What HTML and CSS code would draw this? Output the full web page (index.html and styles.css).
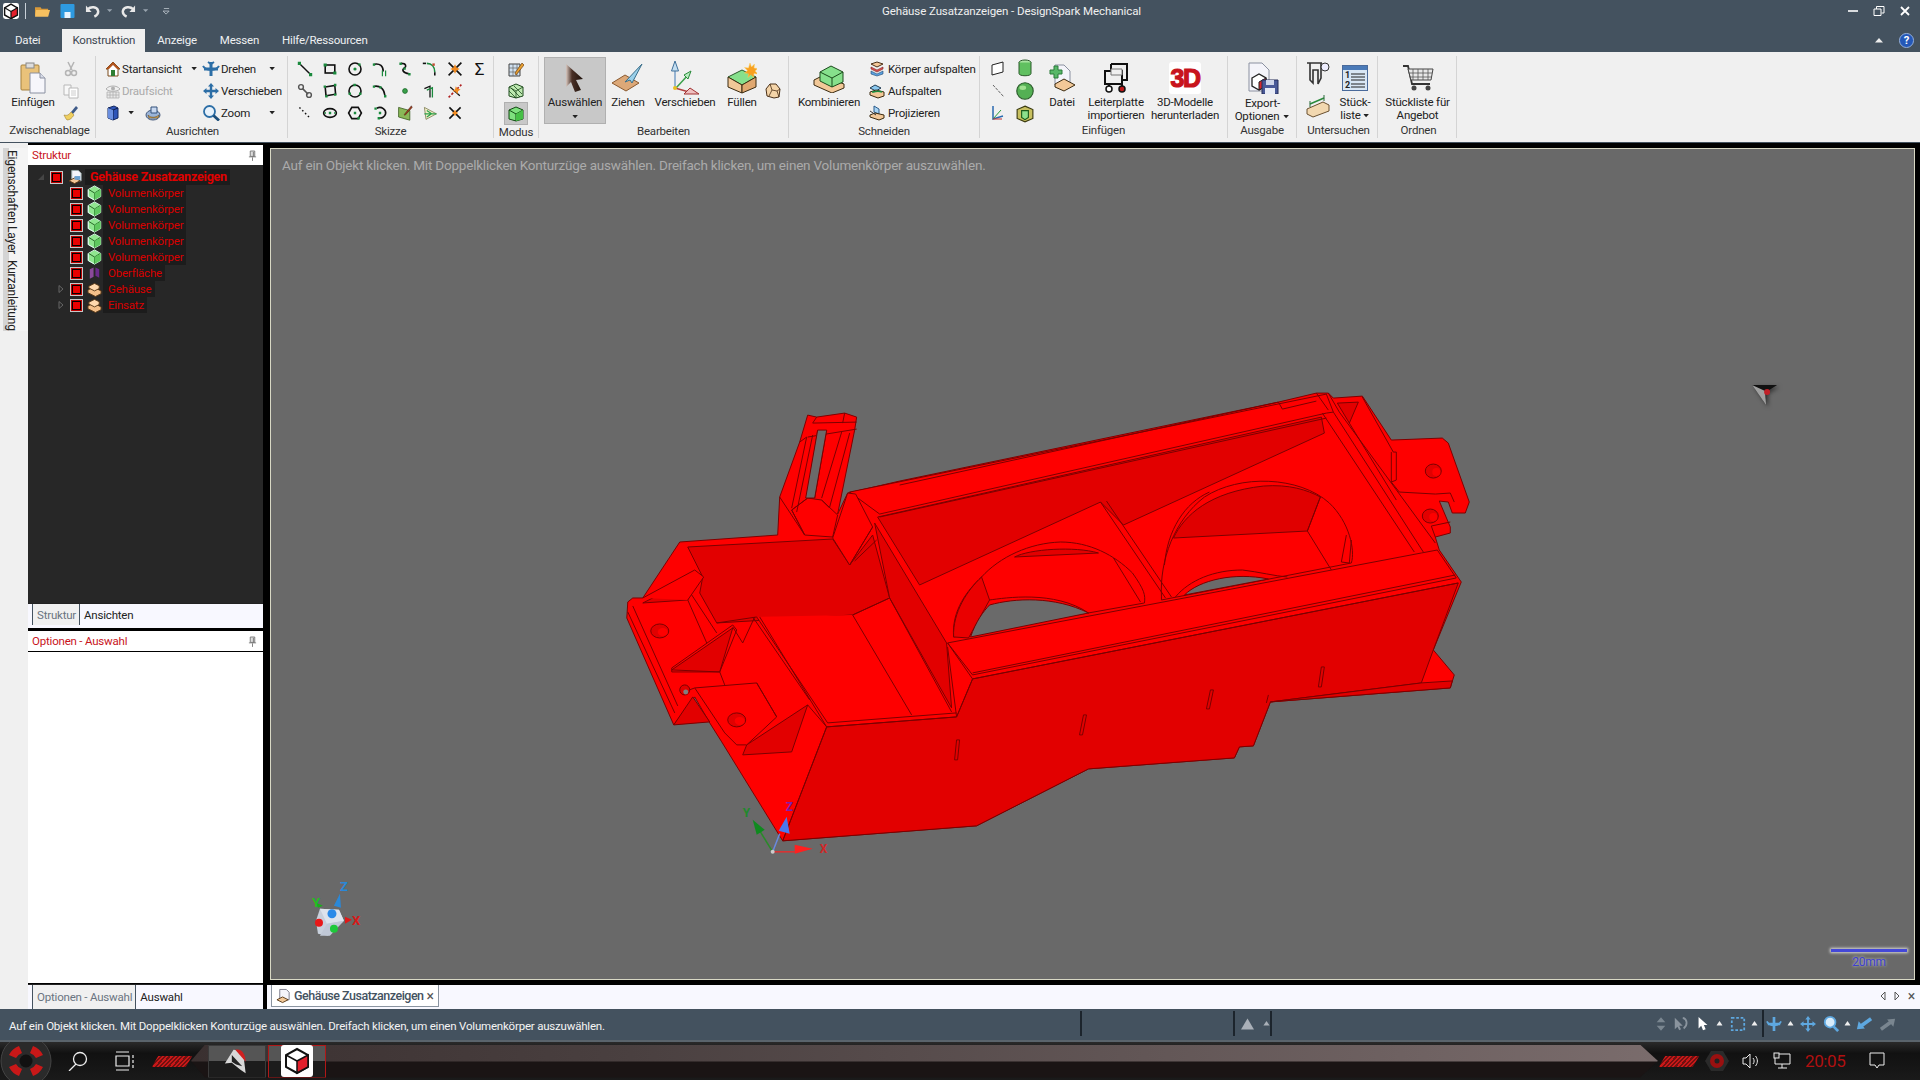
FILE: index.html
```html
<!DOCTYPE html>
<html lang="de">
<head>
<meta charset="utf-8">
<title>Gehäuse Zusatzanzeigen - DesignSpark Mechanical</title>
<link rel="stylesheet" href="styles.css">
</head>
<body>
<svg class="defs" width="0" height="0">
  <defs>
    <symbol id="appcube" viewBox="0 0 20 20"><path d="M10 1.5 18 6v9l-8 4.5L2 15V6z" fill="#fff" stroke="#111" stroke-width="1.8"/><path d="M10 10.5 18 6v9l-8 4.5z" fill="#e3202c" stroke="#111" stroke-width="1.5"/><path d="M2 6l8 4.5" stroke="#111" stroke-width="1.5"/></symbol>
    <symbol id="caret" viewBox="0 0 8 5"><path d="M0 0h7L3.5 4z" fill="#222"/></symbol>
    <symbol id="tri" viewBox="0 0 10 8"><path d="M0 7 5 0l5 7z" fill="#eee"/></symbol>
    <symbol id="greencube" viewBox="0 0 16 18"><path d="M8 1 15 5v8l-7 4-7-4V5z" fill="#8fe68f" stroke="#dfe" stroke-width="1"/><path d="M8 9v8M8 9 1.5 5M8 9l6.500-4" stroke="#1b5a1b" stroke-width="1" fill="none"/><path d="M8 9 15 5v8l-7 4z" fill="#5fc85f"/><path d="M1 5v8l7 4" fill="none" stroke="#dfe"/></symbol>
    <symbol id="partcube" viewBox="0 0 16 16"><path d="M1 9 7 6l8 4v3l-6 3-8-4z" fill="#f4c08a" stroke="#5a3a18"/><path d="M2 5 8 2l5 2.500v3L8 10 2 7z" fill="#ffd9ae" stroke="#5a3a18"/></symbol>
    <symbol id="pin" viewBox="0 0 10 12"><path d="M2.500 1h5v6h-5zM1 7.500h8M5 8v4M6 2v5" stroke="#777" fill="#ddd" stroke-width="1"/></symbol>
  </defs>
</svg>

<header class="titlebar">
  <div class="qat">
    <svg class="qa-app" viewBox="0 0 20 20"><rect width="20" height="20" rx="3" fill="#fff"/><use href="#appcube"/></svg>
    <span class="qa-sep"></span>
    <svg class="qa-ico" viewBox="0 0 16 12"><path d="M0 2h6l1 1.500h7V11H0z" fill="#d99a3a"/><path d="M1 5h15l-2 7H0z" fill="#f6c060"/></svg>
    <svg class="qa-ico qa-save" viewBox="0 0 14 14"><rect width="14" height="14" rx="1" fill="#2e9ae0"/><rect x="4" y="8" width="6" height="6" fill="#e8f4ff"/></svg>
    <svg class="qa-ico qa-undo" viewBox="0 0 16 14"><path d="M3 5c3-3 10-3 11 2 .5 3-2 5-4 6" fill="none" stroke="#e8e8e8" stroke-width="2.600"/><path d="M1 1v7h6z" fill="#e8e8e8"/></svg>
    <svg class="qa-small" viewBox="0 0 8 5"><path d="M0 0h6L3 3z" fill="#9aa5b0"/></svg>
    <svg class="qa-ico qa-redo" viewBox="0 0 16 14"><path d="M13 5C10 2 3 2 2 7c-.5 3 2 5 4 6" fill="none" stroke="#e8e8e8" stroke-width="2.600"/><path d="M15 1v7H9z" fill="#e8e8e8"/></svg>
    <svg class="qa-small" viewBox="0 0 8 5"><path d="M0 0h6L3 3z" fill="#9aa5b0"/></svg>
    <svg class="qa-small qa-cust" viewBox="0 0 8 7"><path d="M1 0h6M0 3h7L3.500 6.500z" stroke="#b8c0c8" fill="none"/></svg>
  </div>
  <div class="title">Gehäuse Zusatzanzeigen - DesignSpark Mechanical</div>
  <div class="winbtns">
    <svg viewBox="0 0 10 10"><path d="M0 5h10" stroke="#fff" stroke-width="1.600"/></svg>
    <svg viewBox="0 0 11 10"><path d="M.5 3h7v6.500h-7zM3 3V.5h7.500V7H8" fill="none" stroke="#fff" stroke-width="1"/></svg>
    <svg viewBox="0 0 10 10"><path d="M1 1l8 8M9 1 1 9" stroke="#fff" stroke-width="1.800"/></svg>
  </div>
</header>

<nav class="tabs">
  <a class="tab t-datei">Datei</a>
  <a class="tab t-active">Konstruktion</a>
  <a class="tab">Anzeige</a>
  <a class="tab">Messen</a>
  <a class="tab">Hilfe/Ressourcen</a>
  <span class="tabs-right">
    <svg class="collapse" viewBox="0 0 8 5"><path d="M0 4.500 4 0l4 4.500z" fill="#eee"/></svg>
    <svg class="help" viewBox="0 0 16 16"><circle cx="8" cy="8" r="7.500" fill="#2458b8" stroke="#9ab4e0"/><text x="8" y="12" text-anchor="middle" class="help-q">?</text></svg>
  </span>
</nav>

<section class="ribbon">
  <div class="group g-clip">
    <div class="gbody">
      <div class="big b-paste">
        <div class="bigico"><svg width="26" height="32" viewBox="0 0 26 32"><rect x="1" y="3" width="18" height="25" rx="1" fill="#e9c27a" stroke="#a5813e"/><rect x="6" y="1" width="8" height="5" fill="#ddd" stroke="#888"/><path d="M10 11h10l5 5v15H10z" fill="#f6f6fb" stroke="#8a90a0"/><path d="M20 11v5h5" fill="#d8dce8" stroke="#8a90a0"/></svg></div>
        <div class="biglabel">Einfügen</div>
      </div>
      <div class="col c-clip">
        <svg class="s" viewBox="0 0 16 16"><path d="M5 1l4 8M11 1 7 9" stroke="#b4b4b4" stroke-width="1.500"/><circle cx="5" cy="12" r="2.500" fill="none" stroke="#b4b4b4" stroke-width="1.500"/><circle cx="11" cy="12" r="2.500" fill="none" stroke="#b4b4b4" stroke-width="1.500"/></svg>
        <svg class="s" viewBox="0 0 16 16"><path d="M1 2h7v10H1z" fill="#f8f8f8" stroke="#b8b8b8"/><path d="M6 5h9v10H6z" fill="#fff" stroke="#b8b8b8"/><path d="M8 8h5M8 10h5M8 12h5" stroke="#ccc"/></svg>
        <svg class="s" viewBox="0 0 16 16"><path d="M8 7 13 1l2 2-5 6z" fill="#3e5a88"/><path d="M1 10c3 1 5 0 7-3l3 3c-2 3-4 5-7 5-1-1-2-3-3-5z" fill="#f0d060" stroke="#a08030" stroke-width=".6"/></svg>
      </div>
    </div>
    <div class="glabel gl-clip">Zwischenablage</div>
  </div>

  <div class="group g-view">
    <div class="gbody">
      <div class="col c-view1">
        <div class="row"><svg class="s" viewBox="0 0 16 16"><path d="M8 1 1 8h2v7h10V8h2z" fill="#fff" stroke="#7a4a1a"/><path d="M8 1 1 8h3l4-4 4 4h3z" fill="#b3541e"/><rect x="6" y="9" width="4" height="6" fill="#2e7d32"/></svg><span class="txt">Startansicht</span><svg class="cr cr-a" viewBox="0 0 8 5"><use href="#caret"/></svg></div>
        <div class="row dim"><svg class="s" viewBox="0 0 16 16"><path d="M1 6c3-4 11-4 14 0-3 3-11 3-14 0z" fill="none" stroke="#b0b0b0"/><circle cx="8" cy="5.500" r="2" fill="#b0b0b0"/><path d="M2 9h12v6H2zM5 9v6M8 9v6M11 9v6M2 12h12" fill="#e8e8e8" stroke="#b0b0b0" stroke-width=".8"/></svg><span class="txt">Draufsicht</span></div>
        <div class="row"><svg class="s" viewBox="0 0 16 16"><path d="M3 3 9 1l4 2v10l-5 2-5-2z" fill="#2e55b8" stroke="#12265e"/><path d="M8 5v10M3 3l5 2 5-2" stroke="#0e1e4a" fill="none"/><path d="M3 3l5 2v10l-5-2z" fill="#6a8fe0"/></svg><svg class="cr cr-b" viewBox="0 0 8 5"><use href="#caret"/></svg><svg class="s s-plane" viewBox="0 0 16 16"><ellipse cx="8" cy="10" rx="7" ry="5" fill="#9ab4d8" stroke="#44587a"/><path d="M3 10c3 3 7 3 11 0l-1 3H4z" fill="#d8a860" stroke="#6a5020" stroke-width=".6"/><path d="M6 2h6v6H6z" fill="#c8d8f0" stroke="#33507a"/></svg></div>
      </div>
      <div class="col">
        <div class="row"><svg class="m" viewBox="0 0 18 16"><path d="M9 1v14M2 8h14" stroke="#2c6ea6" stroke-width="3"/><path d="M1 5c3 5 13 5 16 0M6 1l3 2 3-2" fill="none" stroke="#2c6ea6" stroke-width="2"/></svg><span class="txt">Drehen</span><svg class="cr cr-c" viewBox="0 0 8 5"><use href="#caret"/></svg></div>
        <div class="row"><svg class="m" viewBox="0 0 18 16"><path d="M9 3v10M4 8h10" stroke="#2c6ea6" stroke-width="2.400"/><path d="M9 0l3 3.500H6zM9 16l3-3.500H6zM1 8l3.500-3v6zM17 8l-3.500-3v6z" fill="#2c6ea6"/></svg><span class="txt">Verschieben</span></div>
        <div class="row"><svg class="m" viewBox="0 0 18 16"><circle cx="7.500" cy="6.500" r="5.500" fill="#e8f2fb" stroke="#2c6ea6" stroke-width="1.800"/><path d="M11.500 10.500 17 15.500" stroke="#1c4e7a" stroke-width="2.800"/></svg><span class="txt">Zoom</span><svg class="cr cr-d" viewBox="0 0 8 5"><use href="#caret"/></svg></div>
      </div>
    </div>
    <div class="glabel gl-view">Ausrichten</div>
  </div>

  <div class="group g-sketch">
    <div class="gbody sketch-grid">
      <svg viewBox="0 0 20 20"><path d="M3 3l14 14" stroke="#111" stroke-width="1.800"/><path d="M1 1h4v4H1zM15 15h4v4h-4z" fill="#1b8a3e"/></svg>
      <svg viewBox="0 0 20 20"><rect x="4" y="5" width="12" height="10" fill="none" stroke="#111" stroke-width="2"/><path d="M2 3h4v4H2zM14 13h4v4h-4z" fill="#1b8a3e"/></svg>
      <svg viewBox="0 0 20 20"><circle cx="10" cy="10" r="7.500" fill="none" stroke="#111" stroke-width="2"/><circle cx="10" cy="10" r="2" fill="#1b8a3e"/><rect x="14" y="3" width="3" height="3" fill="#1b8a3e"/></svg>
      <svg viewBox="0 0 20 20"><path d="M3 4c7-1 11 2 11 9" fill="none" stroke="#111" stroke-width="2"/><path d="M13 12v7M17 12v7" stroke="#1b8a3e" stroke-width="1.500"/><rect x="1" y="3" width="3" height="3" fill="#1b8a3e"/></svg>
      <svg viewBox="0 0 20 20"><path d="M5 3c7 0 7 4 4 6-3 2-2 6 6 7" fill="none" stroke="#111" stroke-width="2"/><path d="M3 2h3v3H3zM8 8h3v3H8zM14 15h3v3h-3z" fill="#1b8a3e"/></svg>
      <svg viewBox="0 0 20 20"><path d="M1 3h4" stroke="#111" stroke-width="2"/><path d="M6 3c6 0 10 4 10 11" fill="none" stroke="#1b8a3e" stroke-width="2"/><path d="M16 14v4" stroke="#111" stroke-width="2"/><rect x="13" y="3" width="3" height="3" fill="#c24a30"/></svg>
      <svg viewBox="0 0 20 20"><path d="M2 18 18 2M2 2l16 16" stroke="#111" stroke-width="2"/><path d="M10 4l2 4 4 2-4 2-2 4-2-4-4-2 4-2z" fill="#f08a20"/></svg>
      <span class="sigma">Σ</span>

      <svg viewBox="0 0 20 20"><circle cx="5" cy="5" r="3" fill="none" stroke="#555" stroke-width="1.800"/><path d="M7 7l7 7" stroke="#555" stroke-width="2"/><circle cx="15" cy="15" r="3" fill="none" stroke="#555" stroke-width="1.800"/></svg>
      <svg viewBox="0 0 20 20"><path d="M4 5l12-2 1 11-12 2z" fill="none" stroke="#111" stroke-width="2"/><path d="M2 3h3v3H2zM15 1h3v3h-3zM4 15h3v3H4zM15 13h3v3h-3z" fill="#1b8a3e"/></svg>
      <svg viewBox="0 0 20 20"><circle cx="10" cy="10" r="7.500" fill="none" stroke="#111" stroke-width="2"/><path d="M8 1h3v3H8zM2 12h3v3H2zM15 12h3v3h-3z" fill="#1b8a3e"/></svg>
      <svg viewBox="0 0 20 20"><path d="M3 4c7-1 12 3 13 11" fill="none" stroke="#111" stroke-width="2"/><path d="M1 3h3v3H1zM9 4h3v3H9zM15 15h3v3h-3z" fill="#1b8a3e"/></svg>
      <svg viewBox="0 0 20 20"><circle cx="10" cy="10" r="3" fill="#3aa04a" stroke="#1b6a2a"/></svg>
      <svg viewBox="0 0 20 20"><path d="M3 7l7-3v14" fill="none" stroke="#111" stroke-width="1.600"/><path d="M6 9l7-3v12" fill="none" stroke="#1b8a3e" stroke-width="1.600"/></svg>
      <svg viewBox="0 0 20 20"><path d="M2 18 18 2" stroke="#b02020" stroke-width="2" stroke-dasharray="3 2"/><path d="M4 5l12 11" stroke="#111" stroke-width="1.500"/><path d="M11 4l2 3 4 1-3 2-1 4-2-3-4-1 3-2z" fill="#f08a20"/></svg>
      <span class="blank"></span>

      <svg viewBox="0 0 20 20"><path d="M3 3l14 14" stroke="#111" stroke-width="1.800" stroke-dasharray="2 3"/></svg>
      <svg viewBox="0 0 20 20"><ellipse cx="10" cy="10" rx="8" ry="5.500" fill="none" stroke="#111" stroke-width="2"/><path d="M8.500 8.500h3v3h-3zM3 9h2v2H3zM15 9h2v2h-2z" fill="#1b8a3e"/></svg>
      <svg viewBox="0 0 20 20"><path d="M6 3h8l4 7-4 7H6l-4-7z" fill="none" stroke="#111" stroke-width="2"/><path d="M8.500 8.500h3v3h-3zM13 15h3v3h-3z" fill="#1b8a3e"/></svg>
      <svg viewBox="0 0 20 20"><path d="M6 4c6-3 12 2 11 7-1 4-5 6-8 5" fill="none" stroke="#111" stroke-width="2"/><path d="M3 3h3v3H3zM8.500 8.500h3v3h-3zM7 15h3v3H7z" fill="#1b8a3e"/></svg>
      <svg viewBox="0 0 20 20"><path d="M2 3l14 4v12L2 15z" fill="#8ab858" stroke="#3a5a20"/><path d="M9 12 18 1l1 2-9 10z" fill="#a04020" stroke="#3a1a10" stroke-width=".6"/></svg>
      <svg viewBox="0 0 20 20"><path d="M3 3l15 8-13 7z" fill="#f4f0c8" stroke="#7a7a50"/><path d="M3 11l15 0M6 7l6 4-6 4" fill="none" stroke="#2aa04a" stroke-width="1.500"/></svg>
      <svg viewBox="0 0 20 20"><path d="M3 17 17 3M3 3l14 14" stroke="#111" stroke-width="2"/><path d="M10 6l1.500 2.500L14 10l-2.500 1.500L10 14l-1.500-2.500L6 10l2.500-1.500z" fill="#f08a20"/></svg>
      <span class="blank"></span>
    </div>
    <div class="glabel">Skizze</div>
  </div>

  <div class="group g-mode">
    <div class="gbody">
      <div class="col c-mode">
        <svg class="md" viewBox="0 0 16 16"><path d="M1 3h11v12H1z" fill="#cfe0f0" stroke="#444"/><path d="M1 7h11M1 11h11M5 3v12M9 3v12" stroke="#666" stroke-width=".7"/><path d="M7 12 14 2l2 2-8 10z" fill="#e8a030" stroke="#704010" stroke-width=".7"/></svg>
        <svg class="md" viewBox="0 0 16 16"><path d="M8 1 15 4v9l-7 2-7-2V4z" fill="#bde8b0" stroke="#1e4a1e"/><path d="M3 5l9 9M6 3l8 8M1 8l7 7M8 8v7M1 4l7 4 7-4" stroke="#1e4a1e" stroke-width=".8" fill="none"/></svg>
        <span class="md-on"><svg class="md" viewBox="0 0 16 16"><path d="M8 1 15 4v9l-7 2-7-2V4z" fill="#7ee07e" stroke="#124a12"/><path d="M1 4l7 4 7-4M8 8v7" stroke="#124a12" fill="none"/><path d="M8 8l7-4v9l-7 2z" fill="#46c046"/></svg></span>
      </div>
    </div>
    <div class="glabel">Modus</div>
  </div>

  <div class="group g-edit">
    <div class="gbody">
      <div class="big b-select">
        <div class="bigico"><svg width="22" height="30" viewBox="0 0 22 30"><defs><linearGradient id="arrowg" x1="0" x2="1" y1="0" y2="0"><stop offset="0" stop-color="#d8c8c0"/><stop offset=".35" stop-color="#4a3026"/><stop offset="1" stop-color="#1e120c"/></linearGradient></defs><path d="M2 1 19 16l-7 1 5 10-6 2-4-10-5 5z" fill="url(#arrowg)"/></svg></div>
        <div class="biglabel">Auswählen</div>
        <svg class="cr cr-sel" viewBox="0 0 8 5"><use href="#caret"/></svg>
      </div>
      <div class="big b-44">
        <div class="bigico"><svg width="34" height="30" viewBox="0 0 34 30"><path d="M1 20 14 12l14 8-13 8z" fill="#dca878" stroke="#8a5a30"/><path d="M14 19 31 1 21 20l-2-3z" fill="#9ad0ea" stroke="#3a6e8a"/></svg></div>
        <div class="biglabel">Ziehen</div>
      </div>
      <div class="big b-70">
        <div class="bigico"><svg width="30" height="34" viewBox="0 0 30 34"><path d="M5 27V3" stroke="#7aa0c8" stroke-width="1.500"/><path d="M5 0l3.500 10h-7z" fill="#c4def0" stroke="#40709a"/><path d="M6 27 19 13" stroke="#3aa04a" stroke-width="1.500"/><path d="M21 10l-3 8-4-4z" fill="#b8ecc0" stroke="#2a8a3a"/><path d="M5 27l14 4" stroke="#b04040" stroke-width="1.500"/><path d="M29 33H14l6-6z" fill="#f0c0c0" stroke="#a03030"/><circle cx="5" cy="27" r="2" fill="#e8c020"/></svg></div>
        <div class="biglabel">Verschieben</div>
      </div>
      <div class="big b-44">
        <div class="bigico"><svg width="30" height="32" viewBox="0 0 30 32"><path d="M1 15 15 8l14 7-14 8z" fill="#86e08c" stroke="#2a5a2a"/><path d="M1 15v10l14 6V23z" fill="#f2c898" stroke="#3a2a10"/><path d="M29 15v10l-14 6V23z" fill="#e0a870" stroke="#3a2a10"/><path d="M23 1l1.500 4 3-3-.5 4 4 .5-3 2.500 3 3-4-.5-.5 4-2.500-3-3 3 .5-4-4-.5 3-2.500-3-3 4 .5z" fill="#f8a020" stroke="#f8d060" stroke-width=".5"/></svg></div>
        <div class="biglabel">Füllen</div>
      </div>
      <div class="col c-fill">
        <svg class="md" viewBox="0 0 16 16"><path d="M5 1h6l4 5-1 8-5 1-7-2-1-7z" fill="#f4d4a8" stroke="#4a3018"/><path d="M5 1 7 7l-3 6M7 7l5 1 2 6M12 8l3-2" stroke="#4a3018" fill="none" stroke-width=".8"/></svg>
      </div>
    </div>
    <div class="glabel">Bearbeiten</div>
  </div>

  <div class="group g-cut">
    <div class="gbody">
      <div class="big b-80">
        <div class="bigico"><svg width="32" height="30" viewBox="0 0 32 30"><path d="M1 17 9 13l22 8v4l-12 5L1 22z" fill="#f2c898" stroke="#3a2a10"/><path d="M7 9l11-6 12 6v10l-11 5-12-6z" fill="#86e08c" stroke="#1a4a1a"/><path d="M7 9l12 6 11-6M19 15v9" fill="none" stroke="#1a4a1a"/></svg></div>
        <div class="biglabel">Kombinieren</div>
      </div>
      <div class="col">
        <div class="row r-cut"><svg class="s" viewBox="0 0 16 16"><path d="M2 3l6-2 6 2-6 3z" fill="#f4c89a" stroke="#4a3018"/><path d="M2 6l6 3 6-3v2l-6 3-6-3z" fill="#e05050" stroke="#702020" stroke-width=".6"/><path d="M2 10l6 3 6-3v3l-6 2-6-2z" fill="#5aa0e0" stroke="#204870" stroke-width=".6"/></svg><span class="txt">Körper aufspalten</span></div>
        <div class="row r-cut"><svg class="s" viewBox="0 0 16 16"><path d="M1 5l5-3 6 3-5 3z" fill="#8ac8f0" stroke="#203a50"/><path d="M1 9l6-2 8 2v4l-6 2-8-3z" fill="#f2c898" stroke="#3a2a10"/><path d="M3 9c4 0 5-2 10 0" stroke="#1b8a3e" stroke-width="1.500" fill="none"/></svg><span class="txt">Aufspalten</span></div>
        <div class="row r-cut"><svg class="s" viewBox="0 0 16 16"><path d="M5 1l5 3v5L5 7z" fill="#a8d4f4" stroke="#2a5a8a"/><path d="M1 10l5-2 9 2v3l-5 2-9-3z" fill="#f2c898" stroke="#3a2a10"/><path d="M1 6l6 4" stroke="#333"/></svg><span class="txt">Projizieren</span></div>
      </div>
    </div>
    <div class="glabel">Schneiden</div>
  </div>

  <div class="group g-insert">
    <div class="gbody">
      <div class="col c-ins1">
        <svg class="md" viewBox="0 0 16 16"><path d="M2 4l11-3v10L2 14z" fill="#fff" stroke="#222"/></svg>
        <svg class="md" viewBox="0 0 16 16"><path d="M3 2l11 12" stroke="#666" stroke-dasharray="3 1"/></svg>
        <svg class="md" viewBox="0 0 16 16"><path d="M3 1v13l10-3" fill="none" stroke="#2a6ab0" stroke-width="1.500"/><path d="M3 14 11 5" stroke="#2a9a3a"/><path d="M3 14h9" stroke="#c03030"/></svg>
      </div>
      <div class="col c-ins2">
        <svg class="md lg" viewBox="0 0 16 18"><ellipse cx="8" cy="3.500" rx="6" ry="2.500" fill="#a8e4a0" stroke="#2a5a2a"/><path d="M2 3.500v11c0 3 12 3 12 0v-11" fill="#60c060" stroke="#2a5a2a"/></svg>
        <svg class="md lg" viewBox="0 0 16 16"><circle cx="8" cy="8" r="7.300" fill="#54b054" stroke="#2a5a2a"/><ellipse cx="6" cy="5" rx="3" ry="2" fill="#a0e090"/></svg>
        <svg class="md lg" viewBox="0 0 16 16"><path d="M8 1 15 4v8l-7 3-7-3V4z" fill="#c8c060" stroke="#3a3a10"/><path d="M5 5h6v6l-3 2-3-2z" fill="#8ce08c" stroke="#1a5a1a"/></svg>
      </div>
      <div class="big b-file">
        <div class="bigico"><svg width="26" height="30" viewBox="0 0 26 30"><path d="M6 2h9l6 6v14H6z" fill="#f4f4fa" stroke="#8a90a0"/><path d="M1 7h4V3h4v4h4v4H9v4H5v-4H1z" fill="#58b868" stroke="#2a7a3a"/><path d="M6 21l9-5 11 6-11 6-9-4z" fill="#f2c898" stroke="#3a2a10"/></svg></div>
        <div class="biglabel">Datei</div>
      </div>
      <div class="big b-pcb">
        <div class="bigico"><svg width="24" height="30" viewBox="0 0 24 30"><path d="M7 1h16v16h-5M7 1v7" fill="none" stroke="#111" stroke-width="2"/><path d="M1 8h17v13H1z" fill="none" stroke="#111" stroke-width="2"/><path d="M7 6h11v6H7z" fill="#f0f0f0" stroke="#777"/><path d="M5 21v3M18 21v3" stroke="#111" stroke-width="2"/><circle cx="5" cy="26" r="3" fill="#fff" stroke="#111" stroke-width="1.500"/><circle cx="18" cy="26" r="3" fill="#c01818" stroke="#111" stroke-width="1.500"/></svg></div>
        <div class="biglabel">Leiterplatte<br>importieren</div>
      </div>
      <div class="big b-3d">
        <div class="bigico"><span class="logo3d">3D</span></div>
        <div class="biglabel">3D-Modelle<br>herunterladen</div>
      </div>
    </div>
    <div class="glabel">Einfügen</div>
  </div>

  <div class="group g-out">
    <div class="gbody">
      <div class="big b-export">
        <div class="bigico"><svg width="32" height="32" viewBox="0 0 32 32"><path d="M2 1h13l7 7v21H2z" fill="#f4f4fa" stroke="#8a90a0"/><path d="M5 16l7-4 7 4v8l-7 4-7-4z" fill="#fff" stroke="#222" stroke-width="1.300"/><path d="M12 20l7-4v8l-7 4z" fill="#d8282c" stroke="#222"/><path d="M15 18h16v14H15z" fill="#4a5a98" stroke="#242c58"/><path d="M19 18h8v5h-8z" fill="#cfd6ea"/><path d="M18 26h10v6H18z" fill="#e8ecf6"/></svg></div>
        <div class="biglabel">Export-<br>Optionen<svg class="cr cr-in" viewBox="0 0 8 5"><use href="#caret"/></svg></div>
      </div>
    </div>
    <div class="glabel">Ausgabe</div>
  </div>

  <div class="group g-inspect">
    <div class="gbody">
      <div class="col c-insp">
        <svg class="caliper" viewBox="0 0 26 24"><path d="M2 1h15M5 1v17l3 3V8h5v14l3-6V1" fill="none" stroke="#333" stroke-width="1.600"/><circle cx="20" cy="5" r="4" fill="#eef" stroke="#333"/></svg>
        <svg class="caliper" viewBox="0 0 26 24"><path d="M2 15l16-7 6 3v6L8 23l-6-3z" fill="#f2d8b0" stroke="#6a5030"/><path d="M5 10l14-6" stroke="#2a8a3a" stroke-width="1.500"/><path d="M5 7v6M19 1v6" stroke="#2a6a3a"/></svg>
      </div>
      <div class="big b-bom">
        <div class="bigico"><svg width="26" height="26" viewBox="0 0 26 26"><rect x=".5" y=".5" width="25" height="25" fill="#d8e6f4" stroke="#4a6a9a"/><rect x="1" y="1" width="24" height="4" fill="#4a7ab8"/><text x="3" y="13" class="bom-n">1</text><text x="3" y="23" class="bom-n">2</text><path d="M9 9h14M9 12h14M9 15h14M9 19h14M9 22h14" stroke="#222" stroke-width="1.200"/></svg></div>
        <div class="biglabel">Stück-<br>liste<svg class="cr cr-in2" viewBox="0 0 8 5"><use href="#caret"/></svg></div>
      </div>
    </div>
    <div class="glabel gl-insp">Untersuchen</div>
  </div>

  <div class="group g-order">
    <div class="gbody">
      <div class="big b-cart">
        <div class="bigico"><svg width="32" height="28" viewBox="0 0 32 28"><path d="M1 2h5l4 18h18" fill="none" stroke="#333" stroke-width="1.800"/><path d="M6 5h25l-2 11H9z" fill="#e8e8e8" stroke="#444"/><path d="M11 5v11M16 5v11M21 5v11M26 5v11M7 9h23M8 13h22" stroke="#555" stroke-width=".8"/><circle cx="12" cy="24" r="2.500" fill="#444"/><circle cx="26" cy="24" r="2.500" fill="#444"/></svg></div>
        <div class="biglabel">Stückliste für<br>Angebot</div>
      </div>
    </div>
    <div class="glabel gl-insp">Ordnen</div>
  </div>
</section>
<div class="ribbon-line"></div>

<main class="main">
  <aside class="strip">
    <div class="vtabs">
      <span class="vtab v1">Eigenschaften</span>
      <span class="vtab v2">Layer</span>
      <span class="vtab v3">Kurzanleitung</span>
    </div>
  </aside>

  <aside class="panels">
    <div class="phead">Struktur<svg class="pin" viewBox="0 0 10 12"><use href="#pin"/></svg></div>
    <div class="tree">
      <div class="node root"><svg class="exp" viewBox="0 0 8 8"><path d="M7 1v6H1z" fill="#444"/></svg><span class="chk"></span><svg class="ico" viewBox="0 0 16 16"><path d="M4 1h7l3 3v8H4z" fill="#f4f4fa" stroke="#9aa"/><path d="M1 12l6-3 6 3-6 3z" fill="#f2c898" stroke="#5a3a18"/><path d="M7 7h6v4H7z" fill="#6aa0d0"/></svg><span class="lbl">Gehäuse Zusatzanzeigen</span></div>
      <div class="node"><span class="chk"></span><svg class="ico"><use href="#greencube"/></svg><span class="lbl">Volumenkörper</span></div>
      <div class="node"><span class="chk"></span><svg class="ico"><use href="#greencube"/></svg><span class="lbl">Volumenkörper</span></div>
      <div class="node"><span class="chk"></span><svg class="ico"><use href="#greencube"/></svg><span class="lbl">Volumenkörper</span></div>
      <div class="node"><span class="chk"></span><svg class="ico"><use href="#greencube"/></svg><span class="lbl">Volumenkörper</span></div>
      <div class="node"><span class="chk"></span><svg class="ico"><use href="#greencube"/></svg><span class="lbl">Volumenkörper</span></div>
      <div class="node"><span class="chk"></span><svg class="ico" viewBox="0 0 16 16"><path d="M3 4l4-2v10l-4 2z" fill="#8a4a9a"/><path d="M9 2l4 2v9l-4-2z" fill="#6a2a8a"/></svg><span class="lbl">Oberfläche</span></div>
      <div class="node kid"><svg class="exp" viewBox="0 0 8 8"><path d="M2 .5 6 4 2 7.500z" fill="none" stroke="#666"/></svg><span class="chk"></span><svg class="ico"><use href="#partcube"/></svg><span class="lbl">Gehäuse</span></div>
      <div class="node kid"><svg class="exp" viewBox="0 0 8 8"><path d="M2 .5 6 4 2 7.500z" fill="none" stroke="#666"/></svg><span class="chk"></span><svg class="ico"><use href="#partcube"/></svg><span class="lbl">Einsatz</span></div>
    </div>
    <div class="ptabs"><span class="ptab on">Struktur</span><span class="ptab">Ansichten</span></div>
    <div class="pgap"></div>
    <div class="phead">Optionen - Auswahl<svg class="pin" viewBox="0 0 10 12"><use href="#pin"/></svg></div>
    <div class="pbody"></div>
    <div class="ptabs p2"><span class="ptab on">Optionen - Auswahl</span><span class="ptab">Auswahl</span></div>
  </aside>

  <section class="workspace">
    <div class="viewport">
      <svg class="canvas" viewBox="0 0 1644 830"><g transform="translate(-271 -149)">
        <!-- silhouette -->
        <path fill="#fe0000" stroke="#800000" stroke-width="1" stroke-linejoin="round" d="M783 841 722 742 710 723 695 697 674 725 627 618 628 602 633 598 643 598 680 542 778 535 780 497 800 442 808 415 817 417 845 413 857 417 855 430 838 514 848 493 900 481 1020 456 1279 402 1317 393 1329 393 1334 398 1363 396 1392 440 1443 438 1449 443 1470 502 1466 513 1453 513 1449 502 1440 501 1451 527 1451 533 1436 537 1440 550 1462 582 1434 650 1455 675 1451 688 1271 702 1254 746 1240 747 1235 758 1089 769 977 826Z"/>
        <!-- dark faces -->
        <g fill="#e20000" stroke="#7a0000" stroke-width="1" stroke-linejoin="round">
          <path d="M827 727 957 717 973 679 1459 583 1434 650 1422 683 1271 702 1254 746 1240 747 1235 758 1089 769 977 826 783 841Z"/>
          <path d="M688 547 833 539 850 565 873 535 890 598 853 615 717 623 700 593 703 577Z"/>
          <path d="M878 517 1322 417 1325 433 1124 525 1101 502 920 585Z"/>
          <path d="M875 523 947 643 952 708 890 598Z"/>
          <path d="M643 603 688 600 695 577Z"/>
          <path d="M672 670 733 628 720 672Z"/>
          <path d="M747 745 808 705 792 752 743 755Z"/>
          <path d="M674 725 693 697 710 722Z"/>
          <path d="M1338 403 1359 402 1350 423Z"/>
          <path d="M1422 683 1453 681 1451 688 1271 702Z"/>
        </g>
        <!-- floors, rims, brackets -->
        <g fill="#fe0000" stroke="#7a0000" stroke-width="1" stroke-linejoin="round">
          <path d="M757 617 853 615 957 713 828 723Z" stroke="none"/>
          <path d="M695 688 757 683 777 717 747 745 737 745 725 733Z"/>
          <path d="M643 598 695 570 704 577 688 600"/>
          <path d="M672 668 733 625 737 630 720 672 672 672Z" fill="none"/>
          <path d="M948 643 1422 553 1438 550 1457 578 973 675Z"/>
          <path d="M850 492 1327 394 1334 412 1327 413 880 514Z"/>
          <path d="M808 498 822 500 838 515 833 537 805 535 792 510Z"/>
          <path d="M848 493 856 494 873 527 850 565 833 538Z"/>
        </g>
        <!-- holes -->
        <path fill="#fe0000" stroke="#7a0000" d="M1162 597C1160 560 1175 520 1205 497 1240 474 1300 476 1330 503 1350 522 1356 550 1352 563L1162 600Z"/>
        <path fill="#e00000" stroke="#7a0000" d="M1174 538C1185 515 1210 492 1264 486 1290 484 1308 490 1321 497L1308 531Z"/>
        <path fill="none" stroke="#7a0000" d="M1165 565C1168 530 1185 503 1210 492M1308 531 1332 570M1321 497 1308 531M1347 535 1342 562 1350 563 1352 540"/>
        <path fill="#fe0000" stroke="#7a0000" d="M954 637C952 610 968 590 982 577 1000 557 1030 543 1061 542 1090 542 1115 555 1133 573 1145 590 1146 595 1145 603Z"/>
        <path fill="#e20000" stroke="#7a0000" d="M1015 557C1030 549 1075 546 1099 553Z"/>
        <path fill="#ea0000" stroke="#7a0000" d="M954 637C953 612 968 590 982 577L990 600 969 638Z"/>
        <path fill="none" stroke="#7a0000" d="M1114 558 1141 602M990 600C1005 598 1055 590 1089 613"/>
        <path fill="#6a6a6a" stroke="#7a0000" d="M971 637C976 622 984 611 990 605 1015 598 1055 596 1089 613Z"/>
        <path fill="none" stroke="#7a0000" d="M1176 597C1190 580 1215 570 1243 570 1260 572 1275 576 1288 577"/>
        <path fill="#6a6a6a" stroke="#7a0000" d="M1185 595C1200 580 1235 572 1269 579Z"/>
        <!-- detail lines -->
        <g fill="none" stroke="#7a0000" stroke-width="1">
          <path d="M1101 502 1166 598M1107 501 1172 597"/>
          <path d="M900 485 1279 402M880 517 1327 418M1279 402 1283 409 1317 401M1317 393 1329 410"/>
          <path d="M1323 413 1415 552M1334 412 1424 552M1340 412 1436 543M1329 393 1340 412"/>
          <path d="M1363 397 1394 452 1397 452 1397 480 1392 482 1392 452M1350 423 1397 500M1392 482 1400 492 1436 494 1451 493 1455 502"/>
          <path d="M973 673 1456 575M973 679 1459 583M948 643 973 679M948 647 957 717M973 679 957 717"/>
          <path d="M828 723 957 713M827 727 957 717M757 617 828 723M760 617 827 727M853 615 912 715M890 598 952 712M853 615 890 598M717 623 757 617"/>
          <path d="M753 617 810 700M743 643 755 617M733 627 743 643M827 727 783 841M808 705 827 727"/>
          <path d="M628 612 675 713M633 606 678 706M692 595 717 633M688 600 707 643M720 672 725 685M757 683 777 717M695 688 684 692"/>
          <path d="M850 565 873 527M855 561 877 540"/>
          <path d="M813 423 857 422M817 417 813 423M845 413 843 423M792 508 807 437M797 512 813 435M808 498 818 430M815 498 827 430M822 498 842 432M830 507 850 433M808 437 857 429M808 498 792 510M822 500 830 508M780 497 805 535M792 510 805 535M800 442 807 437"/>
          <path d="M1436 537 1432 526 1451 522"/>
          <path d="M957 740 955 760 958 760 960 740ZM1084 715 1080 735 1083 735 1087 715ZM1211 690 1207 709 1210 709 1214 690ZM1322 667 1319 687 1322 687 1325 667ZM1269 695 1267 703"/>
        </g>
        <path fill="#6a6a6a" d="M818 430 827 430 815 498 806 498Z" stroke="#7a0000"/>
        <!-- mounting holes -->
        <g fill="#e20000" stroke="#7a0000">
          <ellipse cx="660" cy="631" rx="9" ry="7"/><ellipse cx="737" cy="720" rx="9" ry="7"/>
          <ellipse cx="1434" cy="471" rx="8" ry="7"/><ellipse cx="1431" cy="516" rx="8" ry="7"/>
          <ellipse cx="685" cy="690" rx="5" ry="5"/>
        </g>
        <ellipse cx="686" cy="692" rx="2.500" ry="2.500" fill="#808080"/>
        <ellipse cx="1437" cy="472" rx="4" ry="4" fill="#fe0000"/><ellipse cx="1434" cy="517" rx="4" ry="4" fill="#fe0000"/>
        <ellipse cx="663" cy="632" rx="5" ry="4" fill="#fe0000"/><ellipse cx="740" cy="721" rx="5" ry="4" fill="#fe0000"/>
        <!-- origin triad -->
        <g class="triad">
          <path d="M773 852 780 834" stroke="#6a8ae0" stroke-width="1.500"/>
          <path d="M787 817 790 834 779 831Z" fill="#4a78f0"/>
          <path d="M773 852 757 826" stroke="#2a8a2a" stroke-width="1.500"/>
          <path d="M753 820 765 830 757 835Z" fill="#0f8a1f"/>
          <path d="M773 852H795" stroke="#e03030" stroke-width="1.500"/>
          <path d="M813 849 795 845V854Z" fill="#ff2020"/>
          <circle cx="773" cy="852" r="2" fill="#ccc"/>
          <text x="820" y="853" class="tx tx-x">X</text>
          <text x="743" y="817" class="tx tx-y">Y</text>
          <text x="786" y="811" class="tx tx-z">Z</text>
        </g>
        <!-- view cube -->
        <g>
          <path d="M320 909 339 910 344 921 328 936 318 934 316 921Z" fill="#c8d0dc"/>
          <path d="M320 909 339 910 344 921 327 924Z" fill="#dde3ec"/>
          <path d="M327 924 344 921 330 936 320 936Z" fill="#c0c8d6"/>
          <circle cx="332" cy="914" r="4.500" fill="#2a8ae8"/>
          <circle cx="319" cy="923" r="4" fill="#e81818"/>
          <circle cx="334" cy="929" r="4" fill="#1ec83a"/>
          <path d="M334 906 340 894 341 908Z" fill="#2a88d8"/>
          <path d="M318 908 316 903 323 906Z" fill="#18b018"/>
          <path d="M345 917 352 920 345 924Z" fill="#e01818"/>
          <text x="340" y="891" class="cube-t ct-z">Z</text>
          <text x="312" y="907" class="cube-t ct-y">Y</text>
          <text x="352" y="925" class="cube-t ct-x">X</text>
        </g>
        <!-- pointer -->
        <path d="M1753 385 1778 385 1767 392 1767 405Z" fill="#111" filter="drop-shadow(2px 2px 2px #333)"/>
        <path d="M1753 385 1766 391 1767 405Z" fill="#ddd" opacity=".7"/>
        <circle cx="1768" cy="392" r="3" fill="#c02028"/>
      </g></svg>
      <div class="hint">Auf ein Objekt klicken. Mit Doppelklicken Konturzüge auswählen. Dreifach klicken, um einen Volumenkörper auszuwählen.</div>
      <div class="scale"><span class="scale-bar"></span><span class="scale-t">20mm</span></div>
    </div>
    <div class="doctabs">
      <span class="doctab"><svg class="ico" viewBox="0 0 16 16"><path d="M4 1h7l3 3v8H4z" fill="#f4f4fa" stroke="#778"/><path d="M1 12l6-3 6 3-6 3z" fill="#f2c898" stroke="#5a3a18"/></svg><b>Gehäuse Zusatzanzeigen</b><i class="x">×</i></span>
      <span class="docnav"><svg viewBox="0 0 6 10"><path d="M5 1 1 5l4 4z" fill="none" stroke="#555"/></svg><svg viewBox="0 0 6 10"><path d="M1 1l4 4-4 4z" fill="none" stroke="#555"/></svg><i class="x">×</i></span>
    </div>
  </section>
</main>

<footer class="status">
  <div class="st-text">Auf ein Objekt klicken. Mit Doppelklicken Konturzüge auswählen. Dreifach klicken, um einen Volumenkörper auszuwählen.</div>
  <div class="st-cell c1"></div>
  <div class="st-cell c2"><svg class="st-a" viewBox="0 0 14 12"><path d="M0 12 7 0l7 12z" fill="#aab0b8"/></svg><svg class="st-t" viewBox="0 0 10 8"><path d="M0 7 5 0l5 7z" fill="#aab0b8"/></svg></div>
  <div class="st-cell c3"></div>
  <div class="st-cell c4">
    <svg class="si si-ud" viewBox="0 0 14 18"><path d="M7 1l5 6H2zM7 17l5-6H2z" fill="#7a8690"/></svg>
    <svg class="si si-6" viewBox="0 0 18 18"><path d="M2 2v13l3-3 2 4 2-1-2-4h4z" fill="#8a949e"/><path d="M11 2c5 1 6 8 1 12" fill="none" stroke="#8a949e" stroke-width="2"/></svg>
    <svg class="si si-6" viewBox="0 0 14 18"><path d="M2 1v13l3-3 2 5 3-1-2-5h4z" fill="#fff"/></svg><svg class="st-t" viewBox="0 0 10 8"><use href="#tri"/></svg>
    <svg class="si si-7" viewBox="0 0 18 18"><rect x="2" y="2" width="14" height="14" fill="none" stroke="#5ea8e0" stroke-width="2" stroke-dasharray="3 2"/></svg><svg class="st-t" viewBox="0 0 10 8"><use href="#tri"/></svg>
    <span class="st-sep"></span>
    <svg class="si si-2" viewBox="0 0 18 18"><path d="M9 1v16M2 9h14" stroke="#5ea8e0" stroke-width="3"/><path d="M1 6c3 6 13 6 16 0" fill="none" stroke="#5ea8e0" stroke-width="2"/></svg><svg class="st-t" viewBox="0 0 10 8"><use href="#tri"/></svg>
    <svg class="si si-6" viewBox="0 0 18 18"><path d="M9 3v12M3 9h12" stroke="#5ea8e0" stroke-width="2"/><path d="M9 0l3 4H6zM9 18l3-4H6zM0 9l4-3v6zM18 9l-4-3v6z" fill="#5ea8e0"/></svg>
    <svg class="si si-7" viewBox="0 0 18 18"><circle cx="8" cy="7" r="6" fill="#d8ecfa" stroke="#5ea8e0" stroke-width="2"/><path d="M12 12l5 5" stroke="#5ea8e0" stroke-width="3"/></svg><svg class="st-t" viewBox="0 0 10 8"><use href="#tri"/></svg>
    <svg class="si si-5" viewBox="0 0 18 18"><path d="M17 3 6 11" stroke="#5ea8e0" stroke-width="4"/><path d="M1 15l2-9 7 8z" fill="#5ea8e0"/></svg>
    <svg class="si si-8" viewBox="0 0 18 18"><path d="M1 15 12 7" stroke="#7a8690" stroke-width="4"/><path d="M17 3l-2 9-7-8z" fill="#7a8690"/></svg>
  </div>
</footer>

<footer class="taskbar">
  <svg class="orb" viewBox="0 0 52 38"><circle cx="26" cy="19" r="25" fill="#2a2a2a" stroke="#444"/><path d="M9 13A18 18 0 0 1 19 4l3 7a11 11 0 0 0-6 5zM43 13A18 18 0 0 0 33 4l-3 7a11 11 0 0 1 6 5zM9 25a18 18 0 0 0 10 9l3-7a11 11 0 0 1-6-5zM43 25a18 18 0 0 1-10 9l-3-7a11 11 0 0 0 6-5z" fill="#c81818"/><circle cx="26" cy="19" r="6.500" fill="#111"/></svg>
  <svg class="tb-search" viewBox="0 0 20 20"><circle cx="12" cy="8" r="6.500" fill="none" stroke="#eee" stroke-width="1.300"/><path d="M8 13 1 20" stroke="#eee" stroke-width="1.300"/></svg>
  <svg class="tb-tasks" viewBox="0 0 20 20"><path d="M1 1h13M1 5h13v10H1zM1 19h13M18 4v3M18 9v3M18 14v3" fill="none" stroke="#eee" stroke-width="1.200"/></svg>
  <div class="tb-stripe"></div>
  <div class="tb-fill">
    <span class="tb-app"><svg viewBox="0 0 32 30"><path d="M12 2 2 18l8-1 10 8 6 4-2-16c-1-7-6-11-12-11z" fill="#d8d8d8"/><path d="M14 2c8-2 12 6 12 14l-5-6z" fill="#d02020"/><path d="M10 8l12 13-7-2-5-3z" fill="#222"/></svg></span>
    <span class="tb-app tb-on"><svg class="cubeicon" viewBox="0 0 32 32"><rect width="32" height="32" rx="3" fill="#fff"/><path d="M16 4 27 10v12l-11 6-11-6V10z" fill="#fff" stroke="#111" stroke-width="2"/><path d="M16 16 27 10v12l-11 6z" fill="#e3202c" stroke="#111" stroke-width="1.500"/><path d="M5 10l11 6" stroke="#111" stroke-width="1.500"/></svg></span>
  </div>
  <div class="tb-stripe tb-stripe-r"></div>
  <div class="tray">
    <svg class="tr-hex" viewBox="0 0 24 20"><path d="M6 0h12l6 10-6 10H6L0 10z" fill="#2a2a2a"/><circle cx="12" cy="10" r="7" fill="#9a1010"/><circle cx="12" cy="10" r="2.500" fill="#222"/></svg>
    <svg class="tr-ico" viewBox="0 0 18 18"><path d="M1 6h3l4-4v14l-4-4H1z" fill="none" stroke="#eee"/><path d="M11 6c1.500 2 1.500 4 0 6M13.500 4c2.500 3 2.500 7 0 10" fill="none" stroke="#eee"/></svg>
    <svg class="tr-ico" viewBox="0 0 18 18"><path d="M4 2h13v10H2V2zM9 12v4M5 16h9" fill="none" stroke="#eee"/><rect x="1" y="1" width="5" height="5" fill="#222" stroke="#eee"/></svg>
    <span class="clock">20:05</span>
    <svg class="tr-ico tr-note" viewBox="0 0 18 18"><path d="M2 1h14v12h-5l-2 3-2-3H2z" fill="none" stroke="#eee"/></svg>
  </div>
</footer>
</body>
</html>
```
FILE: styles.css
```css
* { box-sizing: border-box; }
html, body { margin: 0; padding: 0; }
body {
  width: 1920px; height: 1080px; overflow: hidden;
  display: flex; flex-direction: column;
  font: 11.5px/14px Roboto, "Liberation Sans", sans-serif;
  letter-spacing: -.2px;
  color: #222; background: #000;
}
.defs { position: absolute; }

/* title bar */
.titlebar { height: 29px; flex: none; background: #44525f; display: flex; align-items: center; position: relative; color: #f0f0f0; }
.qat { display: flex; align-items: center; padding: 0 0 7px 3px; }
.qa-app { width: 16px; height: 16px; }
.qa-sep { width: 1px; height: 16px; background: #c8d0d8; margin: 0 9px 0 6px; }
.qa-ico { width: 15px; height: 14px; }
.qa-save { margin-left: 10px; }
.qa-undo { margin-left: 10px; }
.qa-redo { margin-left: 7px; }
.qa-small { width: 7px; height: 5px; margin-left: 7px; }
.qa-cust { margin-left: 13px; height: 7px; }
.title { position: absolute; left: 882px; top: 4px; white-space: nowrap; letter-spacing: -.1px; }
.winbtns { margin-left: auto; display: flex; gap: 14px; padding-right: 9px; margin-top: -7px; }
.winbtns svg { width: 12px; height: 10px; }

/* tabs */
.tabs { height: 23px; flex: none; background: #44525f; display: flex; align-items: stretch; color: #eef0f2; padding-left: 15px; }
.tab { display: flex; align-items: center; margin-right: 23px; padding-bottom: 1px; }
.t-datei { margin-right: 22px; }
.t-active { background: #f0f0f0; color: #3c4650; padding: 0 10px 1px; margin-right: 12px; }
.tabs-right { margin-left: auto; display: flex; align-items: center; gap: 16px; padding-right: 6px; }
.collapse { width: 8px; height: 5px; }
.help { width: 15px; height: 15px; }
.help-q { font: bold 12px Roboto, sans-serif; fill: #fff; }

/* ribbon */
.ribbon { height: 88px; flex: none; background: #f0f0f0; display: flex; align-items: flex-start; padding-top: 4px; }
.group { height: 82px; border-right: 1px solid #d4d4d4; display: flex; flex-direction: column; flex: none; }
.gbody { height: 69px; display: flex; }
.glabel { text-align: center; line-height: 15px; color: #333; white-space: nowrap; }
.gl-clip { padding-left: 4px; }
.gl-view { margin-left: -7px; }
.gl-insp { padding-left: 3px; }
.g-clip { width: 96px; }
.g-view { width: 192px; padding-left: 9px; }
.g-sketch { width: 206px; }
.g-mode { width: 45px; }
.g-edit { width: 250px; }
.g-cut { width: 191px; }
.g-insert { width: 248px; }
.g-out { width: 69px; }
.g-inspect { width: 81px; }
.g-order { width: 79px; }

.big { display: flex; flex-direction: column; align-items: center; padding-top: 3px; flex: none; position: relative; }
.bigico { height: 37px; display: flex; align-items: center; justify-content: center; }
.biglabel { line-height: 13px; text-align: center; white-space: nowrap; }
.b-paste { width: 66px; }
.b-select { width: 62px; margin: 1px 0 0 5px; height: 67px; padding-top: 1px; background: #c8c8c8; border: 1px solid #b0b0b0; }
.b-44 { width: 44px; }
.b-70 { width: 70px; }
.b-80 { width: 80px; }
.b-file { width: 54px; }
.b-pcb { width: 54px; }
.b-3d { width: 84px; }
.b-export { width: 69px; }
.b-export .biglabel { margin-top: 1px; }
.b-bom { width: 32px; }
.b-cart { width: 79px; }

.logo3d { width: 32px; height: 32px; background: #fff; border-radius: 3px; color: #c8141c; font: 900 25px/32px "Liberation Sans", sans-serif; text-align: center; letter-spacing: -1.500px; -webkit-text-stroke: 1.200px #c8141c; }

.col { display: flex; flex-direction: column; padding-top: 2px; }
.row { height: 22px; display: flex; align-items: center; white-space: nowrap; }
.r-cut { gap: 2px; }
.dim { color: #aaa; }
.txt { margin-left: 1px; }
.s { width: 16px; height: 16px; flex: none; }
.m { width: 18px; height: 16px; flex: none; }
.md { width: 16px; height: 16px; flex: none; }
.lg { width: 18px; height: 18px; }
.c-clip { width: 14px; align-items: center; gap: 6px; padding-top: 5px; margin-left: -2px; }
.c-view1 { width: 97px; }
.c-mode { width: 45px; align-items: center; padding-top: 5px; gap: 6px; }
.md-on { width: 24px; height: 23px; background: #c8c8c8; border: 1px solid #b0b0b0; display: flex; align-items: center; justify-content: center; margin-top: -3px; }
.c-fill { width: 18px; align-items: center; padding-top: 27px; }
.c-ins1 { width: 36px; align-items: center; padding-top: 5px; gap: 6px; }
.c-ins2 { width: 20px; align-items: center; padding-top: 3px; gap: 5px; }
.c-insp { width: 42px; align-items: center; padding-top: 6px; gap: 8px; }
.caliper { width: 26px; height: 24px; }
.bom-n { font: bold 9px Roboto, sans-serif; fill: #222; }

.cr { width: 7px; height: 4px; flex: none; }
.cr-a { margin-left: 9px; }
.cr-b { margin-left: 7px; }
.cr-c { margin-left: 13px; }
.cr-d { margin-left: 19px; }
.cr-sel { margin-top: 6px; }
.cr-in { margin-left: 4px; vertical-align: middle; }
.cr-in2 { margin-left: 2px; vertical-align: middle; }
.s-plane { margin-left: 10px; }

.sketch-grid { display: grid; grid-template-columns: repeat(8, 25px); grid-auto-rows: 22px; padding: 2px 0 0 4px; justify-items: center; align-items: center; }
.sketch-grid svg { width: 16px; height: 16px; }
.sigma { font-size: 17px; line-height: 18px; color: #111; }
.blank { display: block; }

.ribbon-line { height: 3px; flex: none; background: linear-gradient(#f0f0f0 0 2px, #44525f 2px); }

/* main */
.main { height: 866px; flex: none; display: flex; background: #000; }
.strip { width: 28px; flex: none; background: #f0f0f0; padding: 5px 0 0 3px; }
.vtabs { display: flex; flex-direction: column; width: 25px; height: 183px; background: linear-gradient(90deg, #d4d4d4 0 6px, #f4f4f4 6px); }
.vtab { writing-mode: vertical-rl; padding-right: 8px; line-height: 16px; font-size: 12px; color: #222; display: block; white-space: nowrap; padding-top: 2px; }
.v1 { height: 76px; }
.v2 { height: 34px; }
.v3 { height: 73px; }

.panels { width: 235px; flex: none; display: flex; flex-direction: column; padding-top: 2px; }
.phead { height: 20px; flex: none; background: #fff; color: #c8141c; padding-left: 4px; display: flex; align-items: center; justify-content: space-between; padding-right: 6px; }
.pin { width: 9px; height: 11px; }
.tree { height: 438px; flex: none; background: #272727; padding-top: 4px; }
.node { height: 16px; display: flex; align-items: center; padding-left: 42px; }
.root { padding-left: 9px; }
.kid { padding-left: 29px; }
.exp { width: 8px; height: 8px; margin-right: 5px; }
.chk { width: 13px; height: 13px; border: 1px solid #c8c8c8; background: #b80000; display: flex; align-items: center; justify-content: center; flex: none; margin-right: 4px; }
.chk::after { content: ""; width: 7px; height: 7px; background: #e80000; border: 1px solid #000; }
.ico { width: 15px; height: 16px; flex: none; }
.lbl { background: #1c1c1c; color: #d80000; padding: 0 3px 0 5px; margin-left: 1px; line-height: 16px; white-space: nowrap; }
.root .lbl { font-size: 12.500px; font-weight: 700; color: #e00000; margin-left: 2px; }
.root .chk { margin-right: 5px; }
.ptabs { height: 25px; flex: none; background: #f8f8ff; display: flex; padding: 0 0 3px 4px; border-top: 1px solid #222; }
.ptab { padding: 0 3px 0 4px; display: flex; align-items: center; color: #222; white-space: nowrap; }
.ptab.on { background: #f0f0f0; color: #6a7480; border-left: 1px solid #44525f; border-right: 1px solid #44525f; }
.p2 { padding-bottom: 0; }
.pgap { height: 3px; flex: none; background: #000; }
.pbody { height: 332px; flex: none; background: #fff; border-top: 1px solid #000; margin-bottom: 1px; }

.workspace { flex: 1; display: flex; flex-direction: column; padding-top: 5px; min-width: 0; }
.viewport { height: 832px; flex: none; margin: 0 5px 5px 7px; border: 1px solid #d8d8c4; background: #696969; position: relative; overflow: hidden; }
.canvas { display: block; width: 100%; height: 100%; }
.hint { position: absolute; left: 11px; top: 8px; font-size: 13.500px; line-height: 16px; color: #ababab; white-space: nowrap; }
.scale { position: absolute; right: 6px; bottom: 10px; width: 78px; display: flex; flex-direction: column; align-items: center; }
.scale-bar { width: 76px; height: 3px; background: #4448d8; box-shadow: 0 0 3px 1px rgba(255,255,255,.75); }
.scale-t { color: #3c40d0; font-size: 12px; line-height: 14px; margin-top: 3px; text-shadow: 0 0 3px rgba(255,255,255,.8); }
.tx { font: bold 12px Roboto, sans-serif; }
.tx-x { fill: #d02828; }
.tx-y { fill: #1f8a2c; }
.tx-z { fill: #7a1fb0; }
.cube-t { font: bold 13px Roboto, sans-serif; }
.ct-z { fill: #2a88d8; }
.ct-y { fill: #20c020; }
.ct-x { fill: #d81818; }

.doctabs { height: 24px; flex: none; margin-left: 4px; background: #f8f8ff; display: flex; align-items: flex-start; justify-content: space-between; padding: 0 5px 0 4px; }
.doctab { height: 22px; display: flex; align-items: center; border: 1px solid #8a94a0; border-top: none; padding: 0 2px 0 4px; background: #fff; gap: 3px; width: 168px; }
.doctab b { font-size: 12.500px; font-weight: 500; color: #44525f; white-space: nowrap; letter-spacing: -.5px; }
.x { font-style: normal; font-size: 14px; line-height: 14px; color: #555; }
.docnav { display: flex; align-items: center; gap: 8px; height: 22px; }
.docnav svg { width: 6px; height: 10px; }

/* status */
.status { height: 33px; flex: none; background: #44525f; display: flex; align-items: stretch; padding-bottom: 2px; color: #f4f4f4; border-bottom: 2px solid #5a646c; }
.st-text { width: 1080px; padding: 10px 0 0 9px; white-space: nowrap; flex: none; }
.st-cell { border-left: 2px solid #1c242c; flex: none; display: flex; align-items: center; margin: 2px 0; }
.c1 { width: 153px; }
.c2 { width: 37px; padding-left: 6px; gap: 4px; }
.c3 { width: 154px; }
.c4 { width: 496px; border-left: none; }
.st-a { width: 14px; height: 12px; }
.st-t { width: 7px; height: 5px; margin-left: 5px; flex: none; }
.si { width: 16px; height: 16px; flex: none; }
.si-ud { width: 12px; margin-left: 231px; }
.si-2 { margin-left: 2px; }
.si-5 { margin-left: 5px; }
.si-6 { margin-left: 6px; }
.si-7 { margin-left: 7px; }
.si-8 { margin-left: 8px; }
.st-sep { width: 2px; height: 27px; background: #1c242c; margin-left: 4px; flex: none; }

/* taskbar */
.taskbar { height: 38px; flex: none; background: linear-gradient(#2a2a2a, #111 30%, #1a1a1a); display: flex; align-items: center; color: #eee; }
.orb { width: 52px; height: 38px; flex: none; }
.tb-search { width: 20px; height: 20px; margin-left: 16px; }
.tb-tasks { width: 20px; height: 20px; margin-left: 27px; }
.tb-stripe { width: 34px; height: 11px; margin-left: 20px; background: repeating-linear-gradient(110deg, #c81818 0 2px, #701010 2px 4px); transform: skewX(-30deg); }
.tb-fill { flex: 1; height: 33px; margin-left: 2px; display: flex; align-items: stretch; gap: 2px; background: linear-gradient(90deg, #3a3030 0, #4a4040 30%, #7a6c6c 100%); background-size: 100% 50%; background-repeat: no-repeat; background-color: #1a1414; clip-path: polygon(14px 0, calc(100% - 18px) 0, 100% 50%, calc(100% - 18px) 100%, 14px 100%, 0 50%); padding-left: 17px; }
.tb-app { width: 58px; border: 1px solid #3a3a3a; display: flex; align-items: center; justify-content: center; background: linear-gradient(#555 0 50%, #1c1c1c 50%); }
.tb-app svg { width: 28px; height: 26px; }
.tb-on { border-color: #b01818; }
.tb-on .cubeicon { width: 32px; height: 38px; margin: -3px 0; }
.tb-stripe-r { margin-left: 4px; }
.tray { display: flex; align-items: center; padding-left: 9px; width: 224px; flex: none; }
.tr-hex { width: 24px; height: 20px; }
.tr-ico { width: 18px; height: 18px; margin-left: 13px; }
.clock { color: #b01010; font-size: 17px; margin-left: 14px; letter-spacing: -.4px; }
.tr-note { margin-left: 23px; }
```
